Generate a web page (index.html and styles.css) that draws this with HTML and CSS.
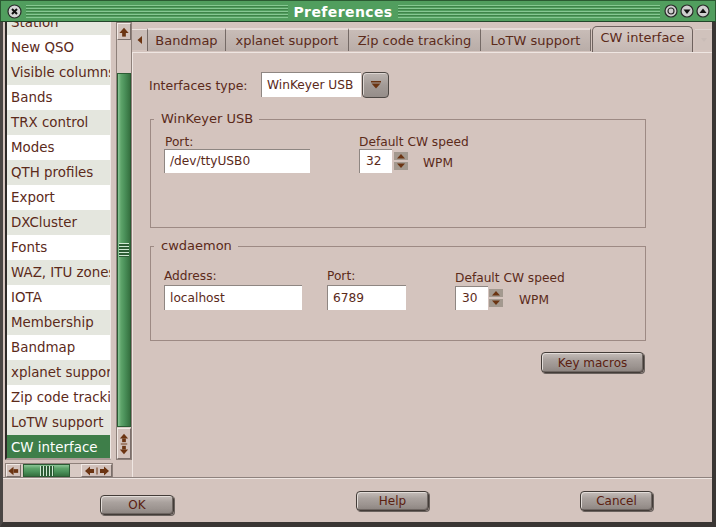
FILE: index.html
```html
<!DOCTYPE html>
<html>
<head>
<meta charset="utf-8">
<title>Preferences</title>
<link rel="stylesheet" href="styles.css">
</head>
<body>
<div class="window">
  <div class="titlebar">
    <span class="tb-btn close">
      <svg width="15" height="15" viewBox="0 0 15 15"><circle cx="7.5" cy="7.5" r="6.5" fill="#d6d6d6" stroke="#2a2a2a" stroke-width="1.2"/><path d="M5 5 L10 10 M10 5 L5 10" stroke="#111" stroke-width="2"/></svg>
    </span>
    <span class="stripes"></span>
    <span class="title">Preferences</span>
    <span class="stripes"></span>
    <span class="tb-right">
      <svg width="14" height="14" viewBox="0 0 14 14"><circle cx="7" cy="7" r="6" fill="#cfcfcf" stroke="#2a2a2a" stroke-width="1.2"/><circle cx="7" cy="7" r="3" fill="none" stroke="#2a2a2a" stroke-width="1.2"/></svg>
      <svg width="14" height="14" viewBox="0 0 14 14"><circle cx="7" cy="7" r="6" fill="#cfcfcf" stroke="#2a2a2a" stroke-width="1.2"/><path d="M3.5 5.5 L10.5 5.5 L7 10 Z" fill="#111"/></svg>
      <svg width="14" height="14" viewBox="0 0 14 14"><circle cx="7" cy="7" r="6" fill="#cfcfcf" stroke="#2a2a2a" stroke-width="1.2"/><path d="M3.5 9 L10.5 9 L7 4.5 Z" fill="#111"/></svg>
    </span>
  </div>
  <div class="frame">
    <div class="main">
      <div class="sidebar">
        <div class="list-row">
          <div class="list">
            <div class="list-inner">
              <div class="item alt cut">Station</div>
              <div class="item">New QSO</div>
              <div class="item alt">Visible columns</div>
              <div class="item">Bands</div>
              <div class="item alt">TRX control</div>
              <div class="item">Modes</div>
              <div class="item alt">QTH profiles</div>
              <div class="item">Export</div>
              <div class="item alt">DXCluster</div>
              <div class="item">Fonts</div>
              <div class="item alt">WAZ, ITU zones</div>
              <div class="item">IOTA</div>
              <div class="item alt">Membership</div>
              <div class="item">Bandmap</div>
              <div class="item alt">xplanet support</div>
              <div class="item">Zip code tracking</div>
              <div class="item alt">LoTW support</div>
              <div class="item selected">CW interface</div>
            </div>
          </div>
          <div class="vscroll">
            <div class="sbtn up">
              <svg width="13" height="14" viewBox="0 0 13 14"><path d="M1.5 8 L6.5 2.5 L11.5 8 Z" fill="#6b3412"/><rect x="4.5" y="8" width="4" height="4" fill="#6b3412"/></svg>
            </div>
            <div class="vtrack">
              <div class="vthumb"><span class="vgrip"></span></div>
            </div>
            <div class="sbtn dbl">
              <svg width="13" height="28" viewBox="0 0 13 28"><path d="M2 8 L6.5 3 L11 8 Z" fill="#6b3412"/><rect x="4.5" y="8" width="4" height="4" fill="#6b3412"/><rect x="3" y="13.5" width="7" height="1" fill="#6b3412"/><rect x="4.5" y="16" width="4" height="4" fill="#6b3412"/><path d="M2 20 L6.5 25 L11 20 Z" fill="#6b3412"/></svg>
            </div>
          </div>
        </div>
        <div class="hscroll">
          <div class="hbtn">
            <svg width="14" height="12" viewBox="0 0 14 12"><path d="M7 1.5 L1.5 6 L7 10.5 Z" fill="#6b3412"/><rect x="7" y="4" width="5" height="4" fill="#6b3412"/></svg>
          </div>
          <div class="hthumb"><span class="hgrip"></span></div>
          <div class="hbtn dbl">
            <svg width="28" height="12" viewBox="0 0 28 12"><path d="M7 1.5 L2 6 L7 10.5 Z" fill="#6b3412"/><rect x="7" y="4" width="4" height="4" fill="#6b3412"/><rect x="13.5" y="2.5" width="1" height="7" fill="#6b3412"/><rect x="17" y="4" width="4" height="4" fill="#6b3412"/><path d="M21 1.5 L26 6 L21 10.5 Z" fill="#6b3412"/></svg>
          </div>
        </div>
      </div>
      <div class="content">
        <div class="tabs">
          <div class="tab-arrow">
            <svg width="8" height="10" viewBox="0 0 8 10"><path d="M6 1 L1.5 5 L6 9 Z" fill="#6b3412"/></svg>
          </div>
          <div class="tab t1">Bandmap</div>
          <div class="tab t2">xplanet support</div>
          <div class="tab t3">Zip code tracking</div>
          <div class="tab t4">LoTW support</div>
          <div class="tab active">CW interface</div>
          <div class="tab-arrow right">
            <svg width="10" height="10" viewBox="0 0 10 10"><path d="M2 3 L8 3 L5 7 Z" fill="#c9bcb7"/></svg>
          </div>
        </div>
        <div class="panel">
          <div class="type-row">
            <span class="lbl type-lbl">Interfaces type:</span>
            <div class="combo">
              <span class="combo-field">WinKeyer USB</span>
              <span class="combo-btn">
                <svg width="12" height="10" viewBox="0 0 12 10"><rect x="1" y="1" width="10" height="1.5" fill="#6b3412"/><path d="M1.5 3.5 L10.5 3.5 L6 8.5 Z" fill="#6b3412"/></svg>
              </span>
            </div>
          </div>

          <div class="group g-winkeyer">
            <span class="legend">WinKeyer USB</span>
            <div class="group-row wk-row">
              <div class="field col-port1">
                <span class="lbl">Port:</span>
                <span class="input">/dev/ttyUSB0</span>
              </div>
              <div class="field col-speed1">
                <span class="lbl">Default CW speed</span>
                <div class="spin-row">
                  <span class="input spin">32</span>
                  <span class="spin-btns">
                    <span class="spin-b"><svg width="14" height="8" viewBox="0 0 14 8"><path d="M3 6.5 L11 6.5 L7 2 Z" fill="#6b3412"/></svg></span>
                    <span class="spin-b"><svg width="14" height="8" viewBox="0 0 14 8"><path d="M3 1.5 L11 1.5 L7 6 Z" fill="#6b3412"/></svg></span>
                  </span>
                  <span class="unit">WPM</span>
                </div>
              </div>
            </div>
          </div>

          <div class="group g-cwd">
            <span class="legend">cwdaemon</span>
            <div class="group-row cwd-row">
              <div class="field col-addr">
                <span class="lbl">Address:</span>
                <span class="input tall">localhost</span>
              </div>
              <div class="field col-port2">
                <span class="lbl">Port:</span>
                <span class="input tall">6789</span>
              </div>
              <div class="field col-speed2">
                <span class="lbl">Default CW speed</span>
                <div class="spin-row">
                  <span class="input spin">30</span>
                  <span class="spin-btns">
                    <span class="spin-b"><svg width="14" height="8" viewBox="0 0 14 8"><path d="M3 6.5 L11 6.5 L7 2 Z" fill="#6b3412"/></svg></span>
                    <span class="spin-b"><svg width="14" height="8" viewBox="0 0 14 8"><path d="M3 1.5 L11 1.5 L7 6 Z" fill="#6b3412"/></svg></span>
                  </span>
                  <span class="unit">WPM</span>
                </div>
              </div>
            </div>
          </div>

          <div class="macros-row">
            <button class="btn macros">Key macros</button>
          </div>
        </div>
      </div>
    </div>
    <div class="footer">
      <button class="btn b-ok">OK</button>
      <button class="btn b-help">Help</button>
      <button class="btn b-cancel">Cancel</button>
    </div>
  </div>
</div>
</body>
</html>
```

FILE: styles.css
```css
* { box-sizing: border-box; }
html, body { margin: 0; padding: 0; }
body {
  width: 716px;
  height: 527px;
  overflow: hidden;
  background: #d4c4be;
  font-family: "DejaVu Sans", "Liberation Sans", sans-serif;
  color: #5b2a1a;
}
.window {
  width: 716px;
  height: 527px;
  display: flex;
  flex-direction: column;
}

/* ---------- title bar ---------- */
.titlebar {
  height: 22px;
  flex: none;
  display: flex;
  align-items: center;
  background: #519e5e;
  border: 1px solid #2b5a32;
  border-bottom: 1px solid #23452a;
  padding: 0 5px 0 6px;
}
.tb-btn { display: flex; width: 15px; height: 15px; }
.stripes {
  flex: 1;
  height: 13px;
  margin: 1px 4px 0 4px;
  background: repeating-linear-gradient(to bottom, #86c892 0 1px, #3f8449 1px 2px, #519e5e 2px 3px);
}
.title {
  color: #ffffff;
  font-weight: bold;
  font-size: 14px;
  letter-spacing: 0.4px;
  padding: 0 1px;
  margin-top: 1px;
}
.tb-right { display: flex; gap: 2px; }
.tb-right svg { display: block; }

/* ---------- frame ---------- */
.frame {
  flex: 1;
  display: flex;
  flex-direction: column;
  border-left: 3px solid #4a4644;
  border-right: 4px solid #3a3634;
  border-bottom: 5px solid #3a3634;
}
.main {
  height: 455px;
  display: flex;
}

/* ---------- sidebar ---------- */
.sidebar {
  width: 130px;
  padding-left: 2px;
  display: flex;
  flex-direction: column;
}
.list-row {
  height: 438px;
  display: flex;
}
.list {
  width: 106px;
  height: 438px;
  overflow: hidden;
  border-left: 2px solid #2e2a28;
  border-right: 1px solid #efe8e4;
  border-bottom: 2px solid #a89a94;
  background: #ffffff;
}
.list-inner { margin-top: -12px; }
.item {
  height: 25px;
  line-height: 25px;
  font-size: 13.4px;
  padding-left: 4px;
  white-space: nowrap;
  overflow: hidden;
  background: #ffffff;
}
.item.alt { background: #e4e6de; }
.item.selected { background: #3e7e49; color: #ffffff; }

.vscroll {
  width: 16px;
  margin-left: 5px;
  display: flex;
  flex-direction: column;
  border: 1px solid #8e807a;
  background: #d4c4be;
}
.sbtn {
  display: flex;
  align-items: center;
  justify-content: center;
  background: #d2c2bc;
  border-top: 1px solid #f2eae6;
  border-left: 1px solid #f2eae6;
  border-bottom: 1px solid #7a6e6a;
  border-right: 1px solid #7a6e6a;
}
.sbtn.up { height: 17px; }
.sbtn.dbl { height: 31px; }
.vtrack {
  flex: 1;
  background: #d8cac4;
}
.vthumb {
  margin-top: 33px;
  height: 354px;
  border: 1px solid #2b5b33;
  background: linear-gradient(to right, #8cc596 0, #5ea46a 25%, #4b915a 55%, #35703f 100%);
  display: flex;
  align-items: center;
  justify-content: center;
}
.vgrip {
  width: 10px;
  height: 14px;
  background: repeating-linear-gradient(to bottom, #cfe8d3 0 1px, #2d5d35 1px 3px);
}

.hscroll {
  height: 15px;
  margin-top: 3px;
  width: 108px;
  display: flex;
  align-items: stretch;
  background: #d8cac4;
  border: 1px solid #8e807a;
}
.hbtn {
  width: 15px;
  display: flex;
  align-items: center;
  justify-content: center;
  background: #d2c2bc;
  border-top: 1px solid #f2eae6;
  border-left: 1px solid #f2eae6;
  border-bottom: 1px solid #7a6e6a;
  border-right: 1px solid #7a6e6a;
}
.hbtn.dbl { width: 31px; margin-left: auto; }
.hthumb {
  width: 47px;
  margin-left: 2px;
  border: 1px solid #2b5b33;
  background: linear-gradient(to bottom, #8cc596 0, #5ea46a 30%, #4b915a 60%, #35703f 100%);
  display: flex;
  align-items: center;
  justify-content: center;
}
.hgrip {
  width: 14px;
  height: 10px;
  background: repeating-linear-gradient(to right, #cfe8d3 0 1px, #2d5d35 1px 3px);
}

/* ---------- content ---------- */
.content {
  flex: 1;
  display: flex;
  flex-direction: column;
}
.tabs {
  height: 30px;
  padding-top: 4px;
  display: flex;
  align-items: flex-end;
}
.tab-arrow {
  width: 15px;
  height: 21px;
  margin-bottom: 2px;
  display: flex;
  align-items: center;
  justify-content: center;
  background: #c9bcb7;
  border-top: 1px solid #ece4e0;
}
.tab-arrow.right {
  width: 17px;
  margin-left: 2px;
  background: #d0c2bc;
  border-top: 1px solid #ded4d0;
}
.tab {
  height: 23px;
  line-height: 21px;
  font-size: 13px;
  text-align: center;
  white-space: nowrap;
  margin-bottom: 1px;
  background: linear-gradient(to bottom, #c8bcb7 0, #b9ada8 100%);
  border-top: 2px solid #e6dcd8;
  border-right: 1px solid #756a66;
}
.tab.t1 { width: 79px; border-left: 1px solid #756a66; }
.tab.t2 { width: 123px; }
.tab.t3 { width: 132px; }
.tab.t4 { width: 110px; }
.tab.active {
  width: 101px;
  height: 26px;
  margin-bottom: 0;
  margin-left: 1px;
  line-height: 22px;
  background: linear-gradient(to bottom, #d6cac5 0, #c4b7b2 100%);
  border: 1px solid #6e625e;
  border-bottom: none;
  border-radius: 5px 5px 0 0;
}

.panel {
  flex: 1;
  border-top: 1px solid #efe6e2;
  border-left: 1px solid #efe6e2;
  padding: 19px 0 0 16px;
  background: #d4c4be;
}
.lbl {
  display: block;
  font-size: 12.2px;
  line-height: 14px;
  white-space: nowrap;
}
.type-row {
  display: flex;
  align-items: center;
  height: 25px;
}
.type-lbl { width: 112px; padding-top: 2px; font-size: 12.5px; }
.combo { display: flex; }
.combo-field {
  width: 100px;
  height: 25px;
  line-height: 24px;
  font-size: 12.2px;
  padding-left: 5px;
  background: #ffffff;
  border-top: 1px solid #8e8682;
  border-left: 1px solid #8e8682;
}
.combo-btn {
  width: 27px;
  height: 26px;
  margin-left: 1px;
  display: flex;
  align-items: center;
  justify-content: center;
  border: 1px solid #4e4844;
  border-radius: 4px;
  background: linear-gradient(to bottom, #bdb5b1 0, #a39b97 50%, #958d89 100%);
  box-shadow: inset 1px 1px 0 #ddd6d2;
}

.group {
  width: 496px;
  margin-left: 1px;
  border: 1px solid #9d8a84;
  display: flex;
  flex-direction: column;
  align-items: flex-start;
}
.legend {
  display: block;
  font-size: 13px;
  line-height: 16px;
  margin: -9px 0 0 3px;
  padding: 0 6px 0 7px;
  background: #d4c4be;
}
.g-winkeyer { margin-top: 22px; padding-bottom: 54px; }
.g-cwd { margin-top: 18px; padding-bottom: 30px; }
.group-row {
  display: flex;
  padding-left: 13px;
}
.wk-row { margin-top: 8px; }
.cwd-row { margin-top: 15px; }
.field { display: flex; flex-direction: column; align-items: flex-start; }
.col-port1 .lbl { padding-left: 1px; }
.input {
  display: block;
  height: 24px;
  line-height: 23px;
  font-size: 12.2px;
  padding-left: 5px;
  background: #ffffff;
  border-top: 1px solid #8e8682;
  border-left: 1px solid #8e8682;
  white-space: nowrap;
}
.input.tall { height: 25px; line-height: 24px; margin-top: 2px; }
.col-port1 { width: 195px; }
.col-port1 .input { width: 146px; }
.col-addr { width: 163px; }
.col-addr .input { width: 138px; }
.col-port2 { width: 128px; }
.col-port2 .input { width: 79px; }
.col-speed2 { margin-top: 2px; }
.col-speed2 .spin-row { margin-top: 1px; }
.spin-row { display: flex; align-items: center; }
.input.spin { width: 33px; padding-left: 6px; }
.spin-btns {
  display: flex;
  flex-direction: column;
  gap: 2px;
  margin-left: 2px;
}
.col-speed2 .spin-btns { margin-left: 1px; }
.spin-b {
  display: flex;
  width: 14px;
  height: 8px;
  background: #a3998f;
}
.spin-b svg { display: block; }
.unit { font-size: 12.2px; margin-left: 15px; margin-top: 3px; }
.col-speed2 .unit { margin-left: 16px; }

.macros-row {
  width: 498px;
  display: flex;
  justify-content: flex-end;
  padding-right: 3px;
  margin-top: 11px;
}

.btn {
  font-family: "DejaVu Sans", "Liberation Sans", sans-serif;
  font-size: 12px;
  color: #5b2010;
  height: 21px;
  padding: 0;
  border: 1px solid #433c38;
  border-radius: 4px;
  background: linear-gradient(to bottom, #c6beba 0, #aaa29e 35%, #9c9490 70%, #8c8480 100%);
  box-shadow: inset 1px 1px 0 #e2dcd8, inset -1px -1px 0 #6e6662, 1px 1px 0 #6a625e;
}
.btn.macros { width: 103px; }

/* ---------- footer ---------- */
.footer {
  flex: 1;
  display: flex;
  align-items: flex-start;
  border-top: 1px solid #8e827e;
  box-shadow: inset 0 1px 0 #efe6e2;
  padding-top: 13px;
}
.b-ok { width: 74px; margin-left: 97px; margin-top: 4px; height: 20px; }
.b-help { width: 73px; margin-left: 182px; height: 20px; }
.b-cancel { width: 73px; margin-left: 151px; height: 20px; }
```
